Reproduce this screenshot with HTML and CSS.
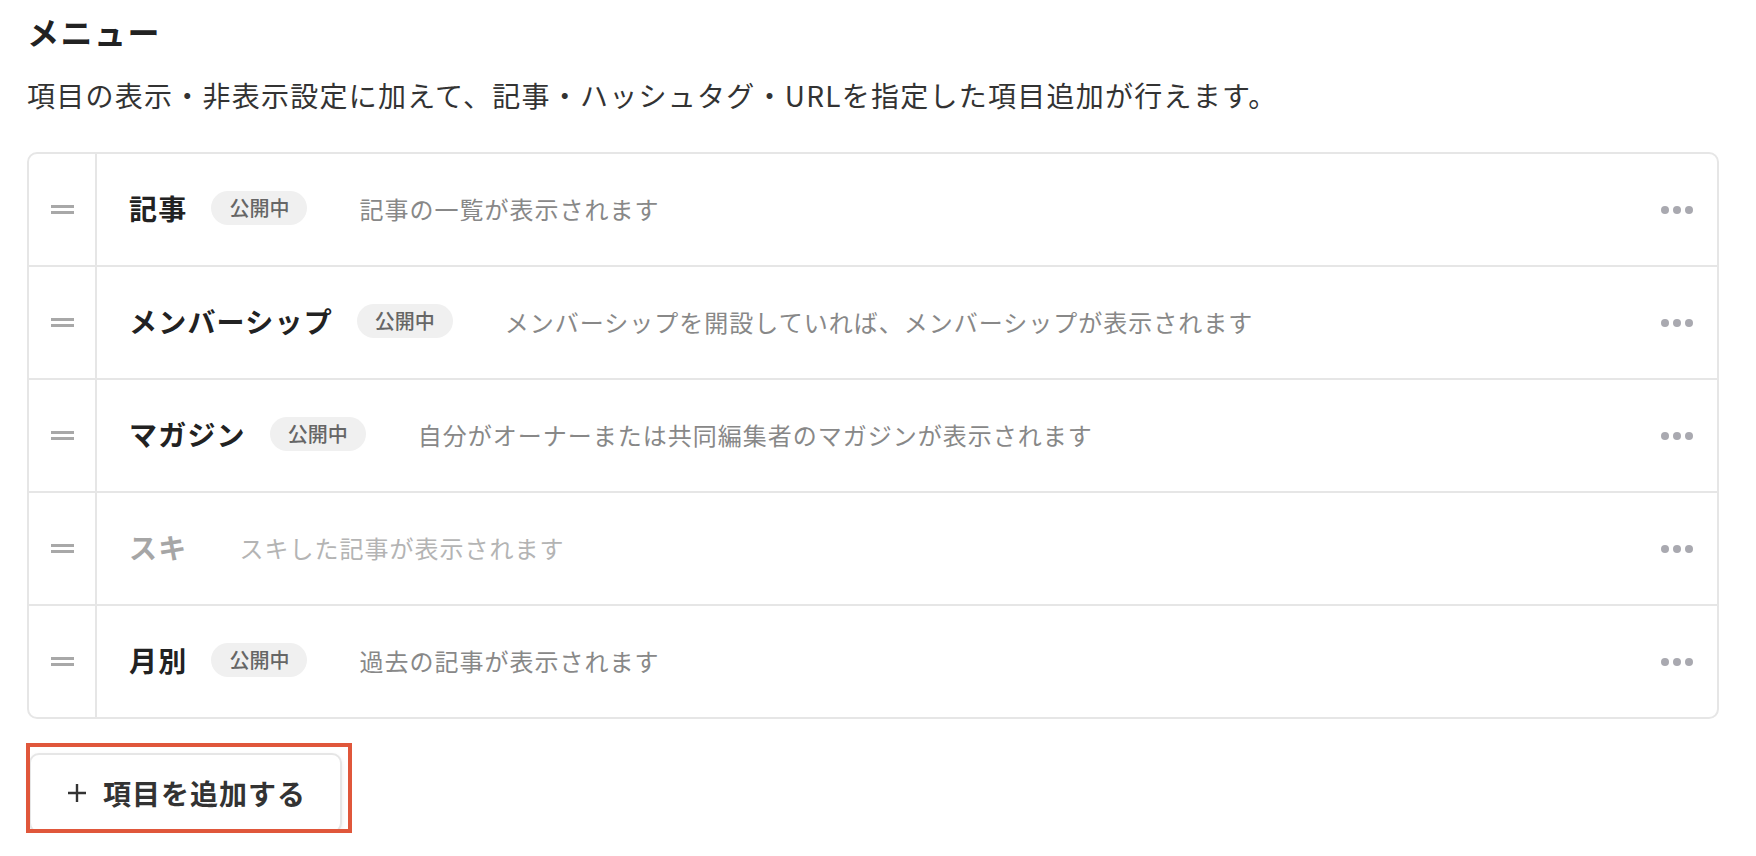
FILE: index.html
```html
<!DOCTYPE html>
<html lang="ja">
<head>
    <meta charset="UTF-8">
    <meta name="viewport" content="width=device-width, initial-scale=1.0">
    <title>メニュー</title>
    <link rel="stylesheet" href="styles.css">
</head>
<body>
    <div class="page">
        <h1 class="title">メニュー</h1>
        <p class="lead">項目の表示・非表示設定に加えて、記事・ハッシュタグ・URLを指定した項目追加が行えます。</p>

        <div class="menu-list">
            <div class="menu-row">
                <div class="handle"><span></span><span></span></div>
                <div class="row-body">
                    <span class="row-name">記事</span>
                    <span class="badge">公開中</span>
                    <span class="row-desc">記事の一覧が表示されます</span>
                </div>
                <div class="more"><i></i><i></i><i></i></div>
            </div>
            <div class="menu-row">
                <div class="handle"><span></span><span></span></div>
                <div class="row-body">
                    <span class="row-name">メンバーシップ</span>
                    <span class="badge">公開中</span>
                    <span class="row-desc">メンバーシップを開設していれば、メンバーシップが表示されます</span>
                </div>
                <div class="more"><i></i><i></i><i></i></div>
            </div>
            <div class="menu-row">
                <div class="handle"><span></span><span></span></div>
                <div class="row-body">
                    <span class="row-name">マガジン</span>
                    <span class="badge">公開中</span>
                    <span class="row-desc">自分がオーナーまたは共同編集者のマガジンが表示されます</span>
                </div>
                <div class="more"><i></i><i></i><i></i></div>
            </div>
            <div class="menu-row hidden">
                <div class="handle"><span></span><span></span></div>
                <div class="row-body">
                    <span class="row-name">スキ</span>
                    <span class="row-desc">スキした記事が表示されます</span>
                </div>
                <div class="more"><i></i><i></i><i></i></div>
            </div>
            <div class="menu-row">
                <div class="handle"><span></span><span></span></div>
                <div class="row-body">
                    <span class="row-name">月別</span>
                    <span class="badge">公開中</span>
                    <span class="row-desc">過去の記事が表示されます</span>
                </div>
                <div class="more"><i></i><i></i><i></i></div>
            </div>
        </div>

        <div class="add-wrap">
            <button class="add-button">
                <svg width="20" height="20" viewBox="0 0 20 20"><path d="M10 1v18M1 10h18" stroke="#333" stroke-width="2.4" fill="none"/></svg>
                項目を追加する
            </button>
            <div class="highlight"></div>
        </div>
    </div>
</body>
</html>
```

FILE: styles.css
```css
body {
    margin: 0;
    font-family: "Noto Sans CJK JP", "Noto Sans", sans-serif;
    color: #222;
    background: #fff;
}
.page {
    padding: 10px 37px 0 27px;
}
.title {
    margin: 0;
    font-size: 32px;
    line-height: 42px;
    font-weight: 700;
    letter-spacing: 1.5px;
}
.lead {
    margin: 23px 0 0;
    font-size: 28px;
    line-height: 40px;
    letter-spacing: 1.25px;
    color: #333;
}
.menu-list {
    margin-top: 37px;
    border: 2px solid #e6e6e6;
    border-radius: 10px;
}
.menu-row {
    display: flex;
    align-items: stretch;
    height: 111px;
    border-bottom: 2px solid #e6e6e6;
}
.menu-row:last-child {
    border-bottom: none;
}
.handle {
    width: 66px;
    border-right: 2px solid #e6e6e6;
    display: flex;
    flex-direction: column;
    align-items: center;
    justify-content: center;
    gap: 3px;
}
.handle span {
    display: block;
    width: 23px;
    height: 3px;
    background: #a8a8a8;
}
.row-body {
    flex: 1;
    display: flex;
    align-items: center;
    padding: 0 0 3px 32px;
}
.row-name {
    font-size: 28px;
    font-weight: 700;
    letter-spacing: 1.2px;
    color: #222;
}
.badge {
    margin-left: 24px;
    height: 34px;
    line-height: 34px;
    padding: 0 18px;
    border-radius: 17px;
    background: #f0f0f0;
    color: #666;
    font-size: 20px;
    font-weight: 500;
}
.row-desc {
    margin-left: 52px;
    font-size: 24px;
    letter-spacing: 1px;
    color: #888;
}
.hidden .row-name {
    color: #a6a6a6;
}
.hidden .row-desc {
    color: #b4b4b4;
}
.more {
    display: flex;
    align-items: center;
    gap: 4px;
    padding-right: 24px;
}
.more i {
    display: block;
    width: 8px;
    height: 8px;
    border-radius: 50%;
    background: #a9a9b0;
}
.add-wrap {
    position: relative;
    display: inline-block;
    margin-top: 34px;
    margin-left: 2px;
}
.add-button {
    display: flex;
    align-items: center;
    gap: 16px;
    width: 313px;
    height: 80px;
    padding: 0 0 0 36px;
    border: 2px solid #e6e6e6;
    border-radius: 10px;
    background: #fff;
    box-shadow: 0 2px 4px rgba(0, 0, 0, 0.08);
    font-family: inherit;
    font-size: 28px;
    font-weight: 700;
    letter-spacing: 1px;
    color: #333;
}
.highlight {
    position: absolute;
    left: -3px;
    top: -10px;
    width: 318px;
    height: 82px;
    border: 4px solid #e0573b;
}
```
